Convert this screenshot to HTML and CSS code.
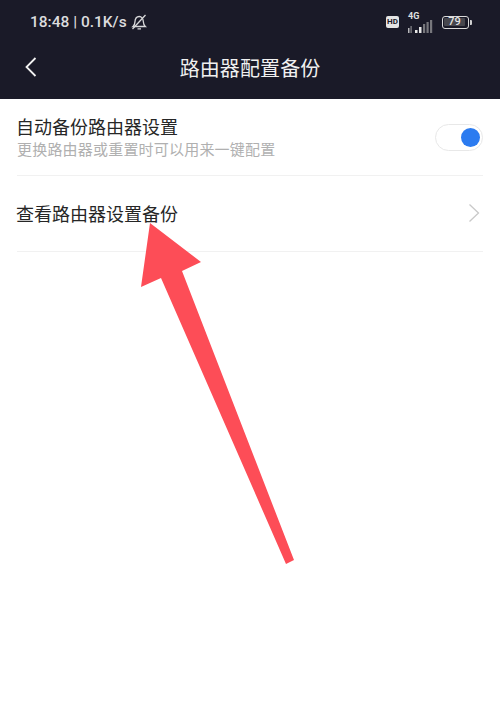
FILE: index.html
```html
<!DOCTYPE html>
<html lang="zh">
<head>
<meta charset="utf-8">
<title>路由器配置备份</title>
<link rel="stylesheet" href="styles.css">
</head>
<body>
<div class="page">
  <header class="top">
    <div class="status">
      <div class="status-left">
        <span class="clock">18:48 | 0.1K/s</span>
        <svg class="bell" width="18" height="16" viewBox="0 0 18 16" fill="none" stroke="#d8d8da" stroke-width="1.3">
          <path d="M3 12.500c1.500-1.200 1.800-2.500 1.900-4.400C5.100 5 6.700 2.500 9.200 2.500s4 2.500 4.100 5.100c.1 2.200.6 3.700 2 4.900z"/>
          <path d="M7.500 14.800h3.500M2.500 15L15.500 1"/>
        </svg>
      </div>
      <div class="status-right">
        <span class="hd">HD</span>
        <div class="signal">
          <span class="net">4G</span>
          <svg width="26" height="14" viewBox="0 0 26 14" fill="#77777c">
            <rect x="0" y="8" width="1.500" height="5" fill="#b8b8bb"/>
            <rect x="2.500" y="6" width="1.200" height="7" fill="#8a8a8e"/>
            <rect x="7" y="10" width="2.500" height="3" fill="#e6e6e6"/>
            <rect x="11" y="7" width="2.500" height="6" fill="#e6e6e6"/>
            <rect x="15" y="4" width="2.200" height="9"/>
            <rect x="18.500" y="2" width="2.200" height="11"/>
            <rect x="22" y="0" width="2.200" height="13"/>
          </svg>
        </div>
        <div class="battery">
          <span class="cell"><span class="level">79</span></span>
          <span class="nub"></span>
        </div>
      </div>
    </div>
    <div class="nav">
      <svg class="back" width="14" height="22" viewBox="0 0 14 22" fill="none" stroke="#f2f2f2" stroke-width="1.800">
        <path d="M11.500 2L2.500 11l9 9"/>
      </svg>
      <h1 class="title">路由器配置备份</h1>
    </div>
  </header>
  <main class="list">
    <section class="row row-auto">
      <div class="texts">
        <div class="label">自动备份路由器设置</div>
        <div class="sub">更换路由器或重置时可以用来一键配置</div>
      </div>
      <span class="switch"><span class="knob"></span></span>
    </section>
    <section class="row row-view">
      <div class="label">查看路由器设置备份</div>
      <svg class="chev" width="12" height="20" viewBox="0 0 12 20" fill="none" stroke="#c9c9c9" stroke-width="1.300">
        <path d="M1.500 1.500L10.500 10l-9 8.500"/>
      </svg>
    </section>
  </main>
  <svg class="arrow" width="500" height="711" viewBox="0 0 500 711">
    <polygon fill="#fd4d57" points="150,223 201,262 182,271 294,560 286,564 161,278 141,287"/>
  </svg>
</div>
</body>
</html>
```
FILE: styles.css
```css
* { box-sizing: border-box; }
html, body { margin: 0; padding: 0; background: #fff; }
body { font-family: "Noto Sans CJK SC", Roboto, "Liberation Sans", sans-serif; }
.page { position: relative; width: 500px; height: 711px; overflow: hidden; background: #fff; }
.top { height: 99px; background: #1a1a28; display: flex; flex-direction: column; }
.status { height: 44px; padding: 10px 28px 0 30px; display: flex; justify-content: space-between; align-items: flex-start; }
.status-left { display: flex; align-items: center; gap: 3px; height: 24px; }
.clock { font-family: Roboto, sans-serif; font-size: 15.500px; font-weight: 500; color: #dcdcde; white-space: nowrap; }
.bell { display: block; }
.status-right { display: flex; align-items: center; height: 24px; }
.hd { width: 13px; height: 12px; margin-right: 9px; background: #e4e4e4; border-radius: 2px; color: #1a1a28; font: 700 8px/12px Roboto, sans-serif; text-align: center; }
.signal { width: 26px; height: 24px; margin-right: 8px; position: relative; padding-top: 10px; }
.net { position: absolute; left: 0; top: 1px; font: 700 9px/10px Roboto, sans-serif; color: #e0e0e0; }
.signal svg { display: block; }
.battery { display: flex; align-items: center; gap: 1px; }
.cell { width: 27px; height: 13px; border: 1.500px solid #dadada; border-radius: 3px; padding: 1px; display: block; }
.level { display: block; width: 21px; height: 8px; background: #46464d; color: #e4e4e4; font: 500 11px/8px Roboto, sans-serif; text-align: center; border-radius: 1px; }
.nub { width: 2px; height: 5px; background: #cfcfcf; border-radius: 0 1px 1px 0; }
.nav { flex: 1; position: relative; display: flex; align-items: center; justify-content: center; padding-bottom: 7px; }
.back { position: absolute; left: 24px; top: 12px; }
.title { margin: 0; font-size: 20px; font-weight: 400; line-height: 28px; color: #f0f0f0; letter-spacing: 0.100px; }
.list { padding: 0 17px; }
.row { display: flex; align-items: center; justify-content: space-between; border-bottom: 1px solid #f1f1f1; }
.row-auto { height: 77px; }
.row-view { height: 76px; padding-bottom: 2px; }
.label { font-size: 18px; line-height: 24px; color: #262626; margin-left: -1px; }
.sub { font-size: 15px; line-height: 22px; letter-spacing: 0.200px; color: #b0b0b0; }
.switch { width: 48px; height: 27px; border: 1px solid #e8e8e8; border-radius: 14px; display: flex; justify-content: flex-end; align-items: center; padding-right: 2px; background: #fff; }
.knob { width: 19px; height: 19px; border-radius: 50%; background: #2b7bf0; }
.chev { margin-right: 3px; }
.arrow { position: absolute; left: 0; top: 0; pointer-events: none; }
```
